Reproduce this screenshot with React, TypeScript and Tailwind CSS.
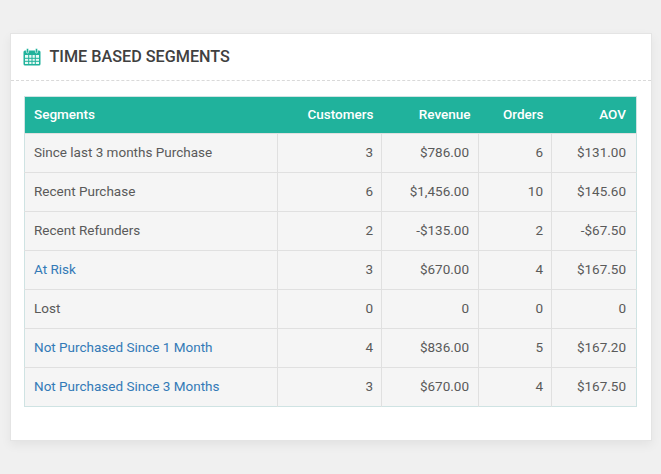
import React from "react";

const rows = [
  ["Since last 3 months Purchase", "3", "$786.00", "6", "$131.00", false],
  ["Recent Purchase", "6", "$1,456.00", "10", "$145.60", false],
  ["Recent Refunders", "2", "-$135.00", "2", "-$67.50", false],
  ["At Risk", "3", "$670.00", "4", "$167.50", true],
  ["Lost", "0", "0", "0", "0", false],
  ["Not Purchased Since 1 Month", "4", "$836.00", "5", "$167.20", true],
  ["Not Purchased Since 3 Months", "3", "$670.00", "4", "$167.50", true],
] as const;

function CalendarIcon() {
  return (
    <svg width="18" height="18" viewBox="0 0 18 18" className="shrink-0">
      <rect x="0.5" y="2.5" width="17" height="15" rx="1.5" fill="#1fb29b" />
      <rect x="2" y="7" width="14" height="9" fill="#e9f8f5" />
      <g fill="#1fb29b">
        <rect x="5.2" y="7" width="1" height="9" />
        <rect x="8.5" y="7" width="1" height="9" />
        <rect x="11.8" y="7" width="1" height="9" />
        <rect x="2" y="9.8" width="14" height="1" />
        <rect x="2" y="12.8" width="14" height="1" />
      </g>
      <rect x="3.4" y="0.5" width="2.2" height="4.5" rx="1" fill="#1fb29b" stroke="#fff" strokeWidth="0.6" />
      <rect x="12.4" y="0.5" width="2.2" height="4.5" rx="1" fill="#1fb29b" stroke="#fff" strokeWidth="0.6" />
    </svg>
  );
}

const cell = "border-l border-t border-[#e0e0e0] pb-[2px] first:border-l-0";

export default function App() {
  return (
    <div className="min-h-[474px] bg-[#f0f0f0] px-[9.5px] pt-[32.5px] font-['Roboto',sans-serif] text-[13.5px] text-[#5a5a5a]">
      <div className="h-[408px] w-[642px] border border-[#e4e4e4] bg-white shadow-[0_4px_10px_rgba(0,0,0,0.06)]">
        <div className="flex h-[47px] items-center gap-[9px] border-b border-dashed border-[#d9d9d9] pl-[12px]">
          <CalendarIcon />
          <h2 className="pt-[2px] text-[16.2px] font-medium text-[#404040]">TIME BASED SEGMENTS</h2>
        </div>
        <div className="pl-[13.5px] pt-[15.5px]">
          <table className="w-[612px] table-fixed border-collapse border border-[#cfe3e3] bg-[#f5f5f5]">
            <colgroup>
              <col className="w-[253px]" />
              <col className="w-[104px]" />
              <col className="w-[97px]" />
              <col className="w-[73px]" />
              <col className="w-[85px]" />
            </colgroup>
            <thead>
              <tr className="h-[37px] bg-[#20b29c] text-white">
                <th className="px-[9px] pb-[2px] text-left font-medium">Segments</th>
                <th className="px-[8px] pb-[2px] text-right font-medium">Customers</th>
                <th className="px-[8px] pb-[2px] text-right font-medium">Revenue</th>
                <th className="px-[8px] pb-[2px] text-right font-medium">Orders</th>
                <th className="pl-[9px] pr-[10px] pb-[2px] text-right font-medium">AOV</th>
              </tr>
            </thead>
            <tbody>
              {rows.map((r) => (
                <tr key={r[0]} className="h-[39px]">
                  <td className={`${cell} px-[9px] ${r[5] ? "text-[#337ab7]" : ""}`}>{r[0]}</td>
                  <td className={`${cell} px-[8px] text-right`}>{r[1]}</td>
                  <td className={`${cell} px-[9px] text-right`}>{r[2]}</td>
                  <td className={`${cell} px-[8px] text-right`}>{r[3]}</td>
                  <td className={`${cell} pl-[9px] pr-[10px] text-right`}>{r[4]}</td>
                </tr>
              ))}
            </tbody>
          </table>
        </div>
      </div>
    </div>
  );
}
